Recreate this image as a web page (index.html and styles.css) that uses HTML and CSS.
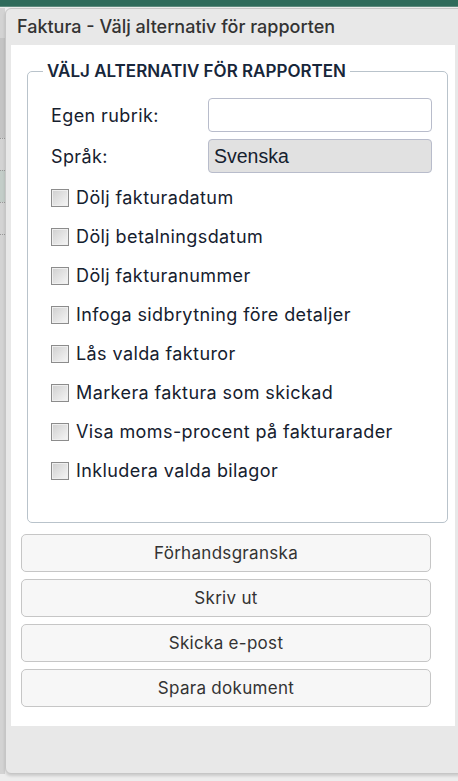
FILE: index.html
```html
<!DOCTYPE html>
<html lang="sv">
<head>
  <meta charset="UTF-8">
  <meta name="viewport" content="width=device-width, initial-scale=1.0">
  <title>Faktura - Välj alternativ för rapporten</title>
  <link rel="stylesheet" href="styles.css">
</head>
<body>
  <div class="topbar"></div>

  <div class="backdrop">
    <div class="page-strip">
      <span class="strip-block"></span>
      <span class="strip-row"></span>
      <span class="strip-row tinted"></span>
      <span class="strip-row"></span>
      <span class="strip-row"></span>
    </div>

    <div class="dialog">
      <div class="dialog-title">Faktura - Välj alternativ för rapporten</div>

      <div class="dialog-body">
        <fieldset class="options">
          <legend>Välj alternativ för rapporten</legend>

          <div class="fields">
            <label for="rubrik">Egen rubrik:</label>
            <input id="rubrik" class="text-input" type="text">

            <label>Språk:</label>
            <div class="readonly-input">Svenska</div>
          </div>

          <ul class="checks">
            <li><label><input type="checkbox"> Dölj fakturadatum</label></li>
            <li><label><input type="checkbox"> Dölj betalningsdatum</label></li>
            <li><label><input type="checkbox"> Dölj fakturanummer</label></li>
            <li><label><input type="checkbox"> Infoga sidbrytning före detaljer</label></li>
            <li><label><input type="checkbox"> Lås valda fakturor</label></li>
            <li><label><input type="checkbox"> Markera faktura som skickad</label></li>
            <li><label><input type="checkbox"> Visa moms-procent på fakturarader</label></li>
            <li><label><input type="checkbox"> Inkludera valda bilagor</label></li>
          </ul>
        </fieldset>

        <div class="actions">
          <button class="btn">Förhandsgranska</button>
          <button class="btn">Skriv ut</button>
          <button class="btn">Skicka e-post</button>
          <button class="btn">Spara dokument</button>
        </div>
      </div>

      <div class="dialog-footer"></div>
    </div>
  </div>
</body>
</html>
```

FILE: styles.css
```css
* {
  margin: 0;
  padding: 0;
  box-sizing: border-box;
}

body {
  font-family: 'Inter', 'Noto Sans', sans-serif;
  background: #ededed;
  color: #15202e;
  height: 781px;
  overflow: hidden;
}

.topbar {
  height: 7px;
  background: #2f6b5b;
  border-bottom: 1px solid #5d8a7d;
}

.backdrop {
  display: flex;
  padding-top: 1px;
}

/* the page behind the dialog, only a sliver shows */
.page-strip {
  width: 5px;
  flex-shrink: 0;
  display: flex;
  flex-direction: column;
  background: #d3d3d3;
  height: 766px;
  overflow: hidden;
}

.strip-block {
  height: 100px;
  margin-top: 30px;
  background: #c4c4c4;
}

.strip-row {
  height: 32px;
  border-top: 1px dotted #999;
}

.strip-row.tinted {
  background: #c3cdc8;
}

.dialog {
  width: 470px;
  flex-shrink: 0;
  background: #e8e8e8;
  border: 1px solid #c6c6c6;
  border-radius: 6px 0 0 6px;
  box-shadow: 0 2px 3px rgba(0, 0, 0, 0.15);
}

.dialog-title {
  height: 36px;
  line-height: 36px;
  padding-left: 11px;
  font-size: 18px;
  font-weight: 500;
  color: #333;
}

.dialog-body {
  width: 444px;
  height: 681px;
  margin-left: 5px;
  background: #fff;
  padding: 16px 0 0 10px;
}

.dialog-footer {
  height: 46px;
}

.options {
  width: 421px;
  margin-left: 6px;
  border: 1px solid #b9c3cb;
  border-radius: 5px;
  padding: 0 15px 32px 23px;
}

.options legend {
  margin-left: -8px;
  padding: 0 4px;
  font-size: 17px;
  line-height: 20px;
  font-weight: 600;
  text-transform: uppercase;
  color: #17263a;
}

.fields {
  display: grid;
  grid-template-columns: 157px 224px;
  grid-auto-rows: 34px;
  row-gap: 7px;
  align-items: center;
  margin-top: 17px;
  font-size: 18px;
  letter-spacing: 0.4px;
}

.text-input,
.readonly-input {
  height: 34px;
  border: 1px solid #b8bccb;
  border-radius: 4px;
  font: inherit;
}

.text-input {
  background: #fff;
}

.readonly-input {
  background: #e1e1e1;
  padding-left: 5px;
  line-height: 32px;
  font-family: 'Liberation Sans', sans-serif;
  font-size: 19.5px;
  letter-spacing: 0;
}

.checks {
  list-style: none;
  margin-top: 5px;
  font-size: 18px;
  letter-spacing: 0.4px;
}

.checks li {
  height: 39px;
  display: flex;
  align-items: center;
}

.checks label {
  display: flex;
  align-items: center;
  gap: 7px;
}

.checks input {
  appearance: none;
  width: 18px;
  height: 18px;
  border: 1px solid #8c8c8c;
  background: linear-gradient(135deg, #cfcfcf, #f6f6f6);
  box-shadow: inset 0 0 0 1px #efefef;
}

.actions {
  display: flex;
  flex-direction: column;
  gap: 7px;
  margin-top: 11px;
}

.btn {
  width: 410px;
  height: 38px;
  background: #f7f7f7;
  border: 1px solid #c6c6c6;
  border-radius: 5px;
  font-family: 'Inter', 'Noto Sans', sans-serif;
  font-size: 17px;
  letter-spacing: 0.3px;
  color: #333;
}
```
